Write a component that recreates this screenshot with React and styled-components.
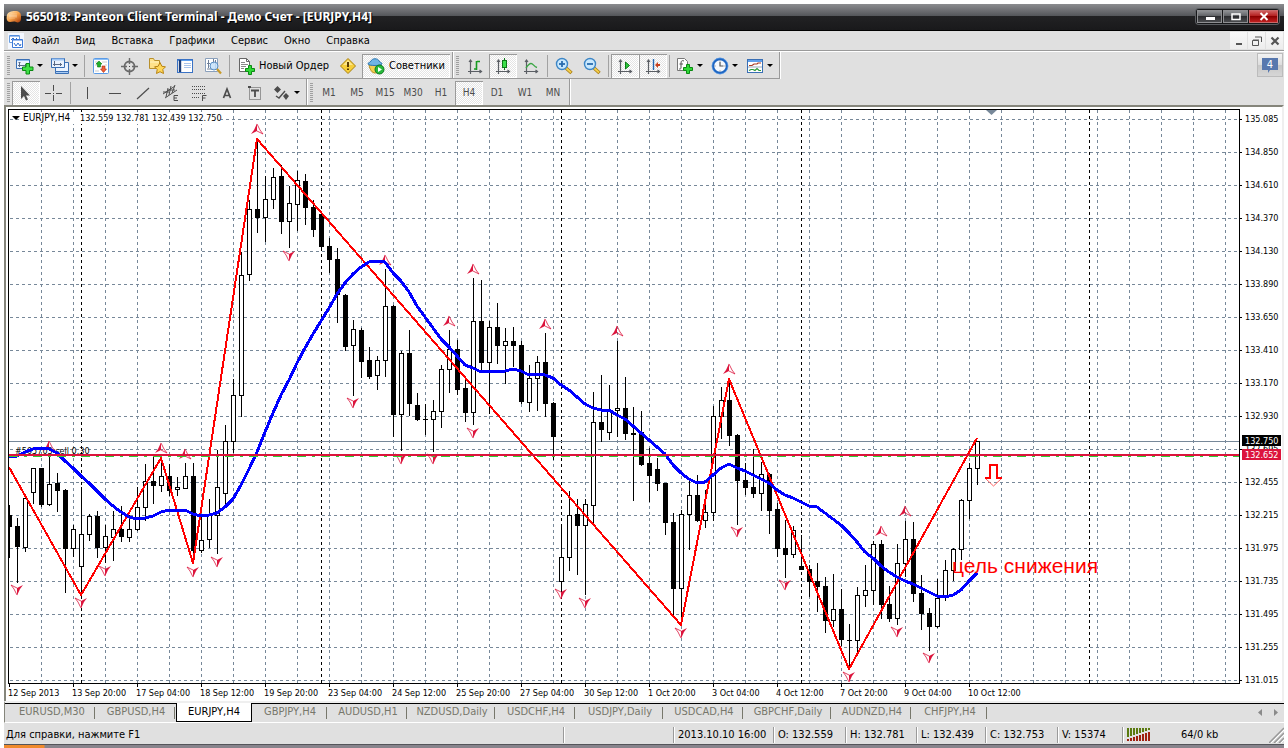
import React, { useState } from 'react'
import styled, { createGlobalStyle } from 'styled-components';

const GlobalStyle = createGlobalStyle`
*{
box-sizing:border-box;
}
body{
margin:0;
background:#fff;
color:#000;
font-family:"DejaVu Sans Condensed","DejaVu Sans",sans-serif;
font-size:11px;
line-height:14px;
}
button{
font:inherit;
color:inherit;
margin:0;
padding:0;
border:0;
background:none;
}
svg{
display:block;
}
`

const Window = styled.div`
padding:4px 4px 0;
display:flex;
flex-direction:column;
`

const TitleBar = styled.header`
display:flex;
align-items:center;
height:27px;
padding:0 5px 2px 2px;
color:#fff;
background:linear-gradient(#8b8c8f 0,#54565a 12px,#222224 12px,#19191b 26px,#000 26px);
`

const TitleText = styled.h1`
flex:1;
margin:0 0 0 4px;
font-family:"Noto Sans",sans-serif;
font-size:12px;
line-height:16px;
font-weight:bold;
white-space:nowrap;
text-shadow:1px 1px 0 #000;
`

const WindowButtons = styled.div`
display:flex;
gap:1px;
padding:1px;
border-radius:3px;
background:#17181a;
box-shadow:0 0 0 1px #5c5e62;
`

const WindowButton = styled.button`
width:${props => props.$close ? 29 : 25}px;
height:13px;
display:flex;
align-items:center;
justify-content:center;
border:1px solid ${props => props.$close ? '#c86a6a' : '#8e8f92'};
background:${props => props.$close
    ? 'linear-gradient(#cf5f5f,#b01818 50%,#8c0000 50%,#c02020)'
    : 'linear-gradient(#8e9093,#5a5c60 50%,#2c2d30 50%,#4a4b4e)'};
`

const MenuBar = styled.nav`
display:flex;
align-items:center;
height:21px;
background:#e0e0e0;
border-bottom:1px solid #fff;
box-shadow:inset 0 -1px 0 #9a9a9a;
padding:0 1px 1px 4px;
`

const MenuItem = styled.button`
padding:0 8px;
`

const MenuSpace = styled.div`
flex:1;
`

const ChildButton = styled.button`
width:17px;
height:17px;
margin-left:1px;
display:flex;
align-items:center;
justify-content:center;
background:linear-gradient(#f8f8f8,#ededed);
`

const ToolRow = styled.div`
display:flex;
justify-content:space-between;
height:${props => props.$last ? 26 : 27}px;
background:#e0e0e0;
`

const ToolBars = styled.div`
display:flex;
`

const ToolBar = styled.div`
display:flex;
align-items:center;
padding:1px 2px 0 3px;
border-right:1px solid #9a9a9a;
box-shadow:1px 0 0 #fff;
border-bottom:${props => props.$line ? '1px solid #9a9a9a' : '0'};
`

const Grip = styled.span`
width:3px;
height:19px;
margin-right:2px;
background:repeating-linear-gradient(#a0a0a0 0,#a0a0a0 1px,#e0e0e0 1px,#e0e0e0 2px);
`

const Divider = styled.span`
width:1px;
height:22px;
margin:0 2px;
background:#a2a2a2;
`

const ToolButton = styled.button`
display:flex;
align-items:center;
gap:3px;
height:24px;
min-width:28px;
padding:0 4px;
justify-content:center;
white-space:nowrap;
${props => props.$on && `
background:repeating-conic-gradient(#e4e4e4 0 25%,#fff 0 50%) 0 0/2px 2px;
box-shadow:inset 1px 1px 0 #9a9a9a,inset -1px -1px 0 #fff;
`}
`

const LabelButton = styled(ToolButton)`
gap:4px;
padding:0 5px;
`

const FrameButton = styled(ToolButton)`
padding:0 3px;
color:#4c4c4c;
font-size:10px;
`

const ChatButton = styled.button`
width:26px;
height:24px;
margin:1px 1px 0 0;
display:flex;
align-items:center;
justify-content:center;
border:1px solid #bcbcbc;
background:linear-gradient(#f3f3f3,#ddd 50%,#c8c8c8 50%,#d6d6d6);
`

const ChartFrame = styled.main`
border:solid;
border-width:2px 2px 0;
border-color:#85857b #efefef #85857b #85857b;
background:#fff;
`

const ChartSvg = styled.svg`
width:100%;
height:auto;
font-family:"DejaVu Sans Condensed","DejaVu Sans",sans-serif;
font-size:9px;
`

const Symbol = styled.text`
font-size:10px;
`

const Note = styled.text`
font-family:"Liberation Sans",Arial,sans-serif;
font-size:21px;
fill:#f00;
`

const TabBar = styled.div`
display:flex;
height:22px;
padding-left:3px;
color:#77776b;
background:#e0e0e0;
border-top:2px solid #efefef;
border-left:1px solid #85857b;
border-bottom:1px solid #fff;
box-shadow:inset 0 1px 0 #000;
`

const tabWidths = { small: 76, medium: 80, large: 88 }

const Tab = styled.button`
flex:0 0 ${props => tabWidths[props.$size]}px;
height:19px;
white-space:nowrap;
position:relative;
border:1px solid transparent;
border-top:0;
${props => props.$on ? `
color:#000;
background:#fff;
border-color:#000;
` : `
&::after{
content:"";
position:absolute;
right:0;
top:4px;
height:12px;
width:1px;
background:#77776b;
}
`}
`

const TabArrows = styled.div`
margin-left:auto;
display:flex;
align-items:center;
gap:6px;
padding-right:4px;
`

const StatusBar = styled.footer`
display:flex;
align-items:center;
height:21px;
padding:2px 0 0 2px;
background:#e0e0e0;
white-space:nowrap;
`

const Cell = styled.span`
flex:${props => props.$width ? `0 0 ${props.$width}px` : '1'};
height:16px;
padding-left:${props => props.$width ? 4 : 0}px;
display:flex;
align-items:center;
gap:30px;
border-left:${props => props.$width ? '1px solid #9a9a9a' : '0'};
box-shadow:${props => props.$width ? 'inset 1px 0 0 #fff' : 'none'};
`

const TaskEdge = styled.div`
height:4px;
border-top:1px solid #55555a;
background:linear-gradient(90deg,#f08a2c 0,#f08a2c 40px,#88848c 41px);
`

/* ---------- icons ---------- */

const Icon = ({ children, w = 18 }) => (
  <svg width={w} height="18" viewBox={`0 0 ${w} 18`} fill="none" aria-hidden="true">{children}</svg>
)

const Caret = () => (
  <svg width="6" height="3" viewBox="0 0 6 3" aria-hidden="true"><path d="M0 0h6L3 3z" fill="#000" /></svg>
)

const Plus = ({ x, y }) => (
  <path transform={`translate(${x} ${y})`} d="M3.500.5h3v3h3v3h-3v3h-3v-3h-3v-3h3z" fill="#2fd836" stroke="#0a8a12" />
)

const LogoIcon = () => (
  <svg width="16" height="16" viewBox="0 0 16 16" aria-hidden="true">
    <defs>
      <linearGradient id="logo" x1="0" y1="0" x2="1" y2="1">
        <stop offset="0" stopColor="#fff0c8" />
        <stop offset=".5" stopColor="#f7a24a" />
        <stop offset="1" stopColor="#a83a08" />
      </linearGradient>
    </defs>
    <path d="M1 6c1-3 4-4 8-4 4 0 6 2 6 5v3c0 3-3 4-5 3-2-1-4 0-6 0-3 0-4-3-3-7z" fill="url(#logo)" />
    <path d="M4 5v5M6 4v6M8 4v6M10 4v5M3 7h8" stroke="#fff" strokeOpacity=".5" strokeWidth=".6" />
  </svg>
)

const AppIcon = () => (
  <svg width="16" height="16" viewBox="0 0 16 16" fill="none" aria-hidden="true">
    <path fill="#f4f8ff" d="M0 0h16v16H0z" />
    <path d="M1.500 2.500h10v7h-10z" fill="#fff" stroke="#6b9fe0" />
    <path d="M2 3h9" stroke="#3c7ad8" />
    <path d="M3 7l2-2 2 2 2-2" stroke="#2f6fd0" />
    <path d="M4.500 6.500h10v8h-10z" fill="#fff" stroke="#3c7ad8" />
    <path d="M5 7h9" stroke="#3c7ad8" />
    <path d="M6 10l2 3 2-3 2 3 1-2" stroke="#2f6fd0" />
  </svg>
)

const NewChartIcon = () => (
  <Icon>
    <path d="M.5 2.500h13v9H.5z" fill="#eaf3ff" stroke="#3a6fb4" />
    <path d="M1 3.500h12" stroke="#8fbcf0" />
    <path d="M3.500 5v5M2 8.500h9M2.500 5.500h2M9.500 7v3" stroke="#5a6a86" />
    <path transform="translate(6 6)" d="M4 .5h3.500V4H11v3.500H7.500V11H4V7.500H.5V4H4z" fill="#3ee046" stroke="#0a8a12" />
  </Icon>
)

const ProfilesIcon = () => (
  <Icon>
    <path d="M4.500 5.500h13v9h-13z" fill="#eaf3ff" stroke="#3a6fb4" />
    <path d="M4.500 14.500h13v2h-13z" fill="#a9ccf5" stroke="#3a6fb4" />
    <path d="M.5 1.500h13v9H.5z" fill="#eaf3ff" stroke="#3a6fb4" />
    <path d="M1 2.500h12" stroke="#9cc4f4" strokeWidth="2" />
    <path d="M3.500 4v5M2 7.500h9M9.500 6v3" stroke="#5a6a86" />
  </Icon>
)

const MarketIcon = () => (
  <Icon>
    <rect x="1.500" y="1.500" width="15" height="15" rx="1" fill="#fff" stroke="#5b9be6" />
    <path d="M2 2.500h14" stroke="#8cc0f8" />
    <path d="M3 5h3M10 5h5M3 8h2M3 14h4M13 8h2" stroke="#ccc" />
    <path d="M7 4l3 3H8.500v3h-3V7H4z" fill="#22b02a" stroke="#0c7a12" strokeWidth=".6" />
    <path d="M11.500 15.500l-3-3.500H10V9h3v3h1.500z" fill="#f06038" stroke="#a82a10" strokeWidth=".6" />
  </Icon>
)

const TargetIcon = () => (
  <Icon>
    <circle cx="9.500" cy="9.500" r="5" stroke="#6a6a6a" strokeWidth="1.800" />
    <path d="M9.500 1v6M9.500 12v6M1 9.500h6M12 9.500h6" stroke="#6a6a6a" strokeWidth="1.400" />
    <path d="M9 9.500h1" stroke="#444" />
  </Icon>
)

const NavigatorIcon = () => (
  <Icon>
    <path d="M1.500 1.500h4l1 2h5v8h-10z" fill="#ffe28a" stroke="#b8902c" />
    <path d="M2 5h9" stroke="#fff3c0" />
    <path d="M12 5.500l1.900 3.800 3.600.5-2.700 2.700.7 4L12 14.700l-3.500 1.800.7-4-2.700-2.700 3.600-.5z" fill="#ffd75a" stroke="#b88414" />
  </Icon>
)

const TerminalIcon = () => (
  <Icon>
    <rect x="1.500" y="2.500" width="15" height="13" fill="#fff" stroke="#3a72c4" />
    <path d="M2 3.500h14" stroke="#5d9fee" />
    <path d="M4 3v12" stroke="#1d3d78" strokeWidth="2.400" />
    <path d="M8 6.500h7M8 8.500h7M8 10.500h7" stroke="#a9c4ea" />
  </Icon>
)

const TesterIcon = () => (
  <Icon>
    <path d="M1.500 1.500h12v13h-12z" fill="#fff" stroke="#8aa0bc" />
    <path d="M4.500 3v8M3 6.500h3M9.500 2v5M11.500 3v9M3 12h9" stroke="#708098" />
    <circle cx="10" cy="9" r="4" fill="#c4e2fb" fillOpacity=".85" stroke="#5b8fc4" />
    <path d="M13 12l4 4.500" stroke="#c89a28" strokeWidth="2.200" />
  </Icon>
)

const OrderIcon = () => (
  <Icon>
    <path d="M2.500 1.500h7l3 3v10h-10z" fill="#fff" stroke="#666" />
    <path d="M9.500 1.500v3h3" stroke="#666" />
    <path d="M4 5.500h4M4 7.500h7M4 9.500h5M4 11.500h3" stroke="#888" />
    <Plus x="8" y="8" />
  </Icon>
)

const WarnIcon = () => (
  <Icon>
    <path d="M9 1.500L16.500 9 9 16.500 1.500 9z" fill="#f7cf3a" stroke="#a8800e" strokeLinejoin="round" />
    <path d="M9 3L14 8H4z" fill="#fbe68c" />
    <path d="M9 5v5M9 11.500v1.500" stroke="#5a3c00" strokeWidth="2" />
  </Icon>
)

const ExpertIcon = () => (
  <Icon>
    <path d="M2 8c1 5 3 8 6 8s6-3 6-8z" fill="#f4cf52" stroke="#b48c1c" />
    <path d="M1 7c0-2 2-1 3-3 1-3 7-3 8 0 1 2 3 1 3 3-1 2-13 2-14 0z" fill="#6fb4e6" stroke="#2f78b0" />
    <circle cx="12.500" cy="12.500" r="4.500" fill="#26b83a" stroke="#0c7a1c" />
    <path d="M11 10l4 2.500-4 2.500z" fill="#fff" />
  </Icon>
)

const Axes = () => (
  <path d="M4.500 3v14M2 14.500h13M3 5l1.500-2L6 5M13.500 13l2 1.500-2 1.500" stroke="#5a5e64" strokeWidth="1.200" />
)

const BarsIcon = () => (
  <Icon><Axes /><path d="M10.500 4v9M8 12h2M11 4.500h3" stroke="#179a22" strokeWidth="1.600" /></Icon>
)

const CandleIcon = () => (
  <Icon><Axes /><path d="M10.500 1v12" stroke="#0d7a18" /><rect x="8.500" y="3.500" width="4" height="7" fill="#3ce04a" stroke="#0d7a18" /></Icon>
)

const LineIcon = () => (
  <Icon><Axes /><path d="M4 11c2-3 4-4.500 5-4.500 2 0 3 3 6 4" stroke="#3aa644" strokeWidth="1.400" /></Icon>
)

const ZoomIcon = ({ plus }) => (
  <Icon>
    <path d="M11 11l5.500 5" stroke="#a87c14" strokeWidth="3.400" />
    <path d="M11 11l5 4.500" stroke="#f4cf4c" strokeWidth="1.800" />
    <circle cx="7" cy="7" r="5.500" fill="#c9e8fd" stroke="#3d86c6" strokeWidth="1.400" />
    <path d="M4 7h6" stroke="#2a6cae" strokeWidth="1.800" />
    {plus && <path d="M7 4v6" stroke="#2a6cae" strokeWidth="1.800" />}
  </Icon>
)

const ScrollIcon = () => (
  <Icon><Axes /><path d="M9.500 5l4 3.500-4 3.500z" fill="#2cc83a" stroke="#0d7a18" /></Icon>
)

const ShiftIcon = () => (
  <Icon><Axes /><path d="M9.500 2v11" stroke="#2468b0" strokeWidth="1.400" /><path d="M11 8l3-3v2h2v2h-2v2z" fill="#c8401c" /></Icon>
)

const IndicatorIcon = () => (
  <Icon>
    <path d="M1.500 1.500h7l3 3v9h-10z" fill="#fff" stroke="#777" />
    <path d="M8 4c-2-1-3 0-3 2v5c0 1-1 1-2 1M3.500 7H7" stroke="#555" />
    <Plus x="7" y="7" />
  </Icon>
)

const ClockIcon = () => (
  <Icon>
    <circle cx="9" cy="9" r="7" fill="#f5f9fe" stroke="#1f66c2" strokeWidth="2.400" />
    <circle cx="9" cy="9" r="8" stroke="#6aa8ee" strokeWidth=".6" />
    <path d="M9 5v4h3.500" stroke="#555" strokeWidth="1.200" />
    <path d="M9 3.500v1M9 13.500v1M3.500 9h1M13.500 9h1" stroke="#777" />
  </Icon>
)

const TemplateIcon = () => (
  <Icon>
    <rect x="1.500" y="2.500" width="15" height="13" fill="#fff" stroke="#3a6fb4" />
    <path d="M2 4h14" stroke="#5f9fea" strokeWidth="2" />
    <path d="M3 8.500h3l2-1.500h3l1-1h3" stroke="#a83c24" strokeWidth="1.200" />
    <path d="M2 10h14" stroke="#9ab" />
    <path d="M3 13.500l2-1h2l2 1 2-2 2 2h2" stroke="#2b9a38" strokeWidth="1.200" />
  </Icon>
)

const CursorIcon = () => (
  <Icon><path d="M4 2v13l3-3 2 4.500 2-1-2-4h4z" fill="#4c4c4c" /></Icon>
)
const CrossIcon = () => (
  <Icon><path d="M8.500 1v6M8.500 11v6M0 9.500h6M11 9.500h6M8 9.500h1" stroke="#4c4c4c" /></Icon>
)
const VertIcon = () => <Icon><path d="M9.500 3v12" stroke="#4c4c4c" /></Icon>
const HorzIcon = () => <Icon><path d="M3 9.500h12" stroke="#4c4c4c" /></Icon>
const TrendIcon = () => <Icon><path d="M3 15L15 4" stroke="#4c4c4c" strokeWidth="1.200" /></Icon>

const ChannelIcon = () => (
  <Icon>
    <path d="M1 10L13 2M3 14L15 6M4 13l2-9M7 11l2-9M10 9l3-8M1 8h6M6 6h7" stroke="#4c4c4c" />
    <path d="M16 11.500h-4v5h4M12 14h3" stroke="#4c4c4c" />
  </Icon>
)

const FiboIcon = () => (
  <Icon>
    <path d="M2 2.500h14M2 5.500h14M2 9.500h14M2 13.500h8" stroke="#4c4c4c" strokeDasharray="1 1" />
    <path d="M12.500 17v-5.500h4M12.500 14h3" stroke="#4c4c4c" />
  </Icon>
)

const LetterA = () => <Icon><path d="M5.500 14L9 5l3.500 9M6.500 11.500h5" stroke="#4c4c4c" strokeWidth="1.700" /></Icon>

const LabelIcon = () => (
  <Icon>
    <rect x="3.500" y="3.500" width="11" height="12" stroke="#4c4c4c" strokeDasharray="1 1" />
    <path d="M2 2h3v2H2z" fill="#4c4c4c" />
    <path d="M5 6.500h8M9 6v7" stroke="#4c4c4c" strokeWidth="1.800" />
  </Icon>
)

const ArrowsIcon = () => (
  <Icon>
    <path d="M4.500 2l3.500 3.500L4.500 9 1 5.500zM13 9l3 3-3 4-3-4z" fill="#4c4c4c" />
    <path d="M3 12l3 2 6-7" stroke="#4c4c4c" strokeWidth="1.400" />
  </Icon>
)

const ChatIcon = () => (
  <svg width="18" height="18" viewBox="0 0 18 18" aria-hidden="true">
    <path d="M1 2h16v12H9l-2 3v-3H1z" fill="#5878ae" />
    <text x="9" y="12" textAnchor="middle" fontSize="11" fill="#fff">4</text>
  </svg>
)

/* ---------- chart data ---------- */

// high, low, body top, body bottom, 1 when the bar closed lower
const candles = [
  [505, 558, 515, 527, 1], [518, 583, 526, 547, 1], [494, 552, 498, 547, 0], [468, 504, 468, 492, 0],
  [468, 507, 468, 505, 1], [455, 506, 484, 504, 0], [473, 512, 483, 491, 1], [489, 593, 490, 549, 1],
  [525, 557, 529, 548, 0], [487, 595, 534, 566, 0], [514, 541, 516, 534, 0], [511, 558, 516, 548, 1],
  [525, 563, 536, 547, 0], [511, 561, 529, 537, 0], [506, 542, 529, 537, 1], [515, 542, 529, 537, 0],
  [487, 531, 507, 529, 0], [464, 521, 481, 507, 0], [457, 504, 481, 486, 1], [457, 492, 476, 485, 0],
  [464, 496, 476, 491, 1], [477, 496, 487, 489, 0], [463, 489, 476, 488, 0], [463, 563, 476, 551, 1],
  [515, 553, 540, 550, 0], [499, 548, 515, 539, 0], [450, 554, 487, 515, 0], [425, 504, 441, 493, 0],
  [379, 453, 395, 441, 0], [252, 417, 275, 395, 0], [200, 281, 209, 274, 0], [139, 233, 209, 218, 1],
  [176, 242, 199, 217, 0], [168, 209, 177, 199, 0], [165, 234, 176, 222, 1], [186, 248, 203, 221, 0],
  [171, 231, 180, 204, 0], [174, 225, 181, 208, 1], [200, 237, 207, 230, 1], [212, 248, 214, 247, 1],
  [238, 273, 246, 260, 1], [248, 323, 259, 295, 1], [294, 351, 295, 347, 1], [320, 396, 329, 345, 0],
  [328, 378, 330, 362, 1], [347, 379, 360, 377, 1], [356, 390, 360, 375, 0], [269, 377, 306, 360, 0],
  [305, 437, 306, 415, 1], [351, 451, 353, 414, 0], [330, 416, 353, 404, 1], [393, 421, 405, 420, 1],
  [404, 435, 419, 420, 1], [400, 452, 411, 419, 0], [365, 428, 369, 411, 0], [330, 393, 349, 369, 0],
  [340, 395, 349, 390, 1], [379, 422, 388, 413, 1], [278, 425, 321, 412, 0], [280, 373, 321, 363, 1],
  [321, 414, 327, 362, 0], [303, 364, 327, 346, 1], [328, 384, 341, 345, 0], [327, 367, 341, 346, 1],
  [341, 404, 345, 402, 1], [365, 412, 378, 402, 0], [356, 411, 362, 378, 0], [333, 417, 362, 404, 1],
  [402, 460, 403, 437, 1], [527, 592, 557, 581, 0], [491, 571, 515, 557, 0], [499, 575, 514, 526, 1],
  [499, 595, 504, 525, 0], [392, 523, 422, 505, 0], [375, 442, 422, 430, 1], [385, 440, 410, 432, 0],
  [341, 437, 408, 410, 0], [377, 440, 408, 434, 1], [407, 501, 433, 435, 1], [411, 466, 432, 465, 1],
  [448, 502, 463, 476, 1], [458, 491, 469, 484, 1], [483, 535, 483, 523, 1], [513, 615, 522, 589, 1],
  [510, 623, 514, 588, 0], [480, 550, 495, 514, 0], [475, 522, 495, 521, 1], [490, 528, 512, 520, 0],
  [406, 521, 416, 512, 0], [387, 439, 400, 416, 0], [379, 446, 400, 436, 1], [434, 525, 435, 481, 1],
  [463, 495, 480, 488, 1], [449, 498, 487, 494, 1], [462, 511, 474, 493, 0], [473, 534, 474, 511, 1],
  [503, 557, 509, 549, 1], [520, 578, 548, 555, 1], [526, 558, 530, 554, 0], [535, 570, 566, 570, 1],
  [565, 597, 569, 582, 1], [563, 612, 581, 587, 1], [577, 633, 586, 621, 1], [574, 627, 609, 620, 0],
  [589, 646, 609, 640, 1], [624, 669, 640, 641, 1], [587, 653, 595, 640, 0], [565, 607, 590, 595, 0],
  [541, 605, 544, 590, 0], [540, 619, 544, 605, 1], [586, 622, 604, 619, 1], [544, 625, 563, 618, 0],
  [521, 577, 539, 563, 0], [522, 602, 539, 594, 1], [575, 630, 593, 614, 1], [608, 651, 613, 627, 1],
  [579, 628, 598, 626, 0], [560, 601, 570, 595, 0], [548, 581, 549, 570, 0], [499, 560, 500, 549, 0],
  [463, 519, 468, 500, 0], [441, 485, 441, 468, 0],
]

// moving average, one value per candle
const average = [
  456, 456, 452, 449, 448, 449, 453, 461, 468, 476, 483, 491, 499, 506, 512, 517, 519, 518, 516, 512,
  510, 511, 510, 514, 516, 515, 513, 507, 499, 485, 469, 452, 432, 413, 395, 380, 363, 348, 334, 321,
  308, 294, 283, 274, 267, 262, 261, 262, 273, 281, 292, 306, 317, 328, 339, 347, 356, 365, 368, 372,
  371, 372, 371, 369, 371, 375, 374, 375, 378, 385, 390, 397, 404, 408, 410, 410, 415, 419, 426, 433,
  440, 447, 454, 465, 473, 479, 483, 482, 475, 468, 464, 468, 471, 475, 479, 483, 490, 495, 498, 502,
  506, 507, 513, 519, 525, 533, 542, 552, 558, 566, 572, 577, 581, 584, 588, 592, 596, 597, 595, 590,
  581, 573,
]

const zigzag = '9,467 81,595 161,458 193,563 257,139 681,625 729,379 849,669 977,438'

const peaks = [[49, 446], [161, 448], [185, 454], [257, 129], [385, 260], [449, 321], [473, 269],
  [545, 324], [617, 331], [729, 369], [881, 531], [905, 511]]

const troughs = [[17, 590], [81, 603], [105, 571], [193, 572], [217, 562], [289, 256], [353, 403],
  [401, 459], [433, 459], [473, 433], [561, 594], [585, 603], [681, 633], [737, 532], [785, 585],
  [849, 677], [897, 632], [929, 658]]

const prices = ['135.085', '134.850', '134.610', '134.370', '134.130', '133.890', '133.650', '133.410',
  '133.170', '132.930', '132.695', '132.455', '132.215', '131.975', '131.735', '131.495', '131.255', '131.015']

const dates = ['12 Sep 2013', '13 Sep 20:00', '17 Sep 04:00', '18 Sep 12:00', '19 Sep 20:00', '23 Sep 04:00',
  '24 Sep 12:00', '25 Sep 20:00', '27 Sep 04:00', '30 Sep 12:00', '1 Oct 20:00', '3 Oct 04:00',
  '4 Oct 12:00', '7 Oct 20:00', '9 Oct 04:00', '10 Oct 12:00']

const columns = Array.from({ length: 39 }, (_, i) => 9 + i * 32)
const dayBreaks = [81, 321, 561, 801, 1089]

const Fractal = ({ x, y, down }) => (
  <g transform={`translate(${x} ${y}) scale(${down ? '-1 -1' : '1 1'})`}>
    <path d="M0-5.500L-3 1l-3 4 3-1.500L0 2z" fill="#dc143c" />
    <path d="M0-5L3 1l3 4-3-1.500L0 2" fill="none" stroke="#dc143c" strokeWidth=".8" />
  </g>
)

const Candle = ({ x, bar }) => {
  const [high, low, top, bottom, fell] = bar
  return (
    <g>
      <path d={`M${x + 0.5} ${high}V${low}`} stroke="#000" />
      {fell
        ? <rect x={x - 2} y={top} width="5" height={bottom - top} />
        : <rect x={x - 1.5} y={top + 0.5} width="4" height={bottom - top} fill="#fff" stroke="#000" />}
    </g>
  )
}

const Chart = () => (
  <ChartSvg viewBox="6 107 1276 594" role="img" aria-label="EURJPY,H4">
    <defs>
      <clipPath id="plot"><rect x="9" y="110" width="1230" height="573" /></clipPath>
    </defs>
    <g clipPath="url(#plot)">
      <g stroke="#778899" strokeDasharray="3 3" shapeRendering="crispEdges">
        {prices.map((p, i) => {
          const y = 119.5 + i * 33
          return <path key={p} d={`M10 ${y}H1239`} />
        })}
        {columns.slice(1).map(x => <path key={x} d={`M${x + 0.5} 110V683`} />)}
      </g>
      <g stroke="#000" strokeDasharray="3 3" shapeRendering="crispEdges">
        {dayBreaks.map(x => <path key={x} d={`M${x + 0.5} 110V683`} />)}
      </g>
      <path d="M9 441.500H1239" stroke="#778899" shapeRendering="crispEdges" />
      <text x="15" y="454">#505703 sell 0.30</text>
      <g shapeRendering="crispEdges">
        {candles.map((bar, i) => <Candle key={i} x={9 + i * 8} bar={bar} />)}
      </g>
      {peaks.map(([x, y]) => <Fractal key={x} x={x} y={y} />)}
      {troughs.map(([x, y]) => <Fractal key={x} x={x} y={y} down />)}
      <g fill="none" shapeRendering="crispEdges" strokeLinejoin="round">
        <polyline points={zigzag} stroke="#f00" strokeWidth="2" />
        <polyline points={average.map((y, i) => `${9 + i * 8},${y}`).join(' ')} stroke="#00f" strokeWidth="3" />
      </g>
      <g shapeRendering="crispEdges">
        <path d="M9 456.500H1239" stroke="#32cd32" strokeDasharray="9 6 3 6" />
        <path d="M9 455H1239" stroke="#dc143c" strokeWidth="2" />
      </g>
      <path d="M985 478h5v-13h7v13h5" fill="none" stroke="#f00" strokeWidth="2" />
      <path d="M986 479l7.500 7 7.500-7" fill="none" stroke="#f66" />
      <Note x="952" y="573">цель снижения</Note>
      <path d="M986 110h11l-5.500 5z" fill="#778899" />
      <rect x="22" y="112" width="199" height="12" fill="#fff" />
      <path d="M12 116h8l-4 4z" />
      <Symbol x="23" y="121">EURJPY,H4</Symbol>
      <text x="80" y="121">132.559 132.781 132.439 132.750</text>
    </g>
    <rect x="8.500" y="109.500" width="1231" height="574" fill="none" stroke="#000" shapeRendering="crispEdges" />
    {prices.map((p, i) => (
      <g key={p}>
        <path d={`M1240 ${119.5 + i * 33}h2`} stroke="#000" />
        <text x="1245" y={122 + i * 33}>{p}</text>
      </g>
    ))}
    {dates.map((d, i) => (
      <g key={d}>
        <path d={`M${9.5 + i * 64} 684v3`} stroke="#000" />
        <text x={8 + i * 64} y="696">{d}</text>
      </g>
    ))}
    <rect x="1242" y="435" width="39" height="11" />
    <text x="1245" y="444" fill="#fff">132.750</text>
    <rect x="1242" y="449" width="39" height="11" fill="#dc143c" />
    <text x="1245" y="458" fill="#fff">132.652</text>
  </ChartSvg>
)

/* ---------- page ---------- */

const menus = ['Файл', 'Вид', 'Вставка', 'Графики', 'Сервис', 'Окно', 'Справка']
const frames = ['M1', 'M5', 'M15', 'M30', 'H1', 'H4', 'D1', 'W1', 'MN']

const tabs = [
  ['EURUSD,M30', 'large'], ['GBPUSD,H4', 'medium'], ['EURJPY,H4', 'small'], ['GBPJPY,H4', 'small'],
  ['AUDUSD,H1', 'medium'], ['NZDUSD,Daily', 'large'], ['USDCHF,H4', 'medium'], ['USDJPY,Daily', 'large'],
  ['USDCAD,H4', 'medium'], ['GBPCHF,Daily', 'large'], ['AUDNZD,H4', 'medium'], ['CHFJPY,H4', 'small'],
]

const App = () => {
  const [frame, setFrame] = useState('H4')
  const [tab, setTab] = useState('EURJPY,H4')

  return (
    <>
      <GlobalStyle />
      <Window>
        <TitleBar>
          <LogoIcon />
          <TitleText>565018: Panteon Client Terminal - Демо Счет - [EURJPY,H4]</TitleText>
          <WindowButtons>
            <WindowButton aria-label="Minimize">
              <svg width="10" height="9" viewBox="0 0 10 9"><path d="M1 5h9v3H1z" fill="#fff" /></svg>
            </WindowButton>
            <WindowButton aria-label="Maximize">
              <svg width="10" height="9" viewBox="0 0 10 9"><path d="M1 2h8v5.500H1z" fill="none" stroke="#fff" strokeWidth="1.500" /></svg>
            </WindowButton>
            <WindowButton $close aria-label="Close">
              <svg width="10" height="9" viewBox="0 0 10 9"><path d="M1.500 1l7 7M8.500 1l-7 7" stroke="#fff" strokeWidth="2" /></svg>
            </WindowButton>
          </WindowButtons>
        </TitleBar>

        <MenuBar>
          <AppIcon />
          {menus.map(m => <MenuItem key={m}>{m}</MenuItem>)}
          <MenuSpace />
          <ChildButton aria-label="Minimize chart">
            <svg width="10" height="10" viewBox="0 0 10 10"><path d="M2 7h6v2H2z" fill="#555" /></svg>
          </ChildButton>
          <ChildButton aria-label="Restore chart">
            <svg width="10" height="10" viewBox="0 0 10 10" fill="none" stroke="#555"><path d="M3 1h6.500v5M.5 4.500h6v5h-6zM1 4h6" /></svg>
          </ChildButton>
          <ChildButton aria-label="Close chart">
            <svg width="10" height="10" viewBox="0 0 10 10"><path d="M1.500 1.500l7 7M8.500 1.500l-7 7" stroke="#555" strokeWidth="2.200" /></svg>
          </ChildButton>
        </MenuBar>

        <ToolRow>
          <ToolBars>
            <ToolBar $line>
              <Grip />
              <ToolButton aria-label="New chart"><NewChartIcon /><Caret /></ToolButton>
              <ToolButton aria-label="Profiles"><ProfilesIcon /><Caret /></ToolButton>
              <Divider />
              <ToolButton aria-label="Market watch"><MarketIcon /></ToolButton>
              <ToolButton aria-label="Data window"><TargetIcon /></ToolButton>
              <ToolButton aria-label="Navigator"><NavigatorIcon /></ToolButton>
              <ToolButton aria-label="Terminal"><TerminalIcon /></ToolButton>
              <ToolButton aria-label="Tester"><TesterIcon /></ToolButton>
              <Divider />
              <LabelButton><OrderIcon />Новый Ордер</LabelButton>
              <ToolButton aria-label="Editor"><WarnIcon /></ToolButton>
              <LabelButton $on><ExpertIcon />Советники</LabelButton>
            </ToolBar>
            <ToolBar $line>
              <Grip />
              <ToolButton aria-label="Bars"><BarsIcon /></ToolButton>
              <ToolButton $on aria-label="Candlesticks"><CandleIcon /></ToolButton>
              <ToolButton aria-label="Line"><LineIcon /></ToolButton>
              <Divider />
              <ToolButton aria-label="Zoom in"><ZoomIcon plus /></ToolButton>
              <ToolButton aria-label="Zoom out"><ZoomIcon /></ToolButton>
              <Divider />
              <ToolButton $on aria-label="Auto scroll"><ScrollIcon /></ToolButton>
              <ToolButton $on aria-label="Chart shift"><ShiftIcon /></ToolButton>
              <Divider />
              <ToolButton aria-label="Indicators"><IndicatorIcon /><Caret /></ToolButton>
              <ToolButton aria-label="Periods"><ClockIcon /><Caret /></ToolButton>
              <ToolButton aria-label="Templates"><TemplateIcon /><Caret /></ToolButton>
            </ToolBar>
          </ToolBars>
          <ChatButton aria-label="Messages"><ChatIcon /></ChatButton>
        </ToolRow>

        <ToolRow $last>
          <ToolBars>
            <ToolBar>
              <Grip />
              <ToolButton $on aria-label="Cursor"><CursorIcon /></ToolButton>
              <ToolButton aria-label="Crosshair"><CrossIcon /></ToolButton>
              <Divider />
              <ToolButton aria-label="Vertical line"><VertIcon /></ToolButton>
              <ToolButton aria-label="Horizontal line"><HorzIcon /></ToolButton>
              <ToolButton aria-label="Trend line"><TrendIcon /></ToolButton>
              <ToolButton aria-label="Channel"><ChannelIcon /></ToolButton>
              <ToolButton aria-label="Fibonacci"><FiboIcon /></ToolButton>
              <ToolButton aria-label="Text"><LetterA /></ToolButton>
              <ToolButton aria-label="Text label"><LabelIcon /></ToolButton>
              <ToolButton aria-label="Arrows"><ArrowsIcon /><Caret /></ToolButton>
            </ToolBar>
            <ToolBar>
              <Grip />
              {frames.map(f => (
                <FrameButton key={f} $on={f === frame} onClick={() => setFrame(f)}>{f}</FrameButton>
              ))}
            </ToolBar>
          </ToolBars>
        </ToolRow>

        <ChartFrame>
          <Chart />
        </ChartFrame>

        <TabBar>
          {tabs.map(([name, size]) => (
            <Tab key={name} $size={size} $on={name === tab} onClick={() => setTab(name)}>{name}</Tab>
          ))}
          <TabArrows>
            <button aria-label="Previous tabs">
              <svg width="12" height="7" viewBox="0 0 12 7"><path d="M8 0v7L4 3.500z" fill="#8a8a8a" /></svg>
            </button>
            <button aria-label="Next tabs">
              <svg width="8" height="7" viewBox="0 0 8 7"><path d="M2 0v7l4-3.500z" fill="#8a8a8a" /></svg>
            </button>
          </TabArrows>
        </TabBar>

        <StatusBar>
          <Cell>Для справки, нажмите F1</Cell>
          <Cell $width={110} />
          <Cell $width={100}>2013.10.10 16:00</Cell>
          <Cell $width={72}>O: 132.559</Cell>
          <Cell $width={71}>H: 132.781</Cell>
          <Cell $width={69}>L: 132.439</Cell>
          <Cell $width={72}>C: 132.753</Cell>
          <Cell $width={65}>V: 15374</Cell>
          <Cell $width={147}>
            <svg width="24" height="13" viewBox="0 0 24 13" aria-hidden="true">
              {[0, 1, 2, 3, 4, 5, 6, 7].map(i => (
                <g key={i}>
                  <path d={`M${i * 3} 0h2v${9 - i}h-2z`} fill="#5a7a10" />
                  <path d={`M${i * 3} ${11 - i}h2V13h-2z`} fill="#a02010" />
                </g>
              ))}
            </svg>
            64/0 kb
          </Cell>
          <svg width="15" height="17" viewBox="0 0 15 17" aria-hidden="true">
            <path d="M0 17L15 2M5 17L15 7M10 17l5-5" stroke="#999" strokeWidth="1.500" />
            <path d="M2 17L15 4M7 17l8-8M12 17l3-3" stroke="#fff" />
          </svg>
        </StatusBar>
        <TaskEdge />
      </Window>
    </>
  )
}

export default App
